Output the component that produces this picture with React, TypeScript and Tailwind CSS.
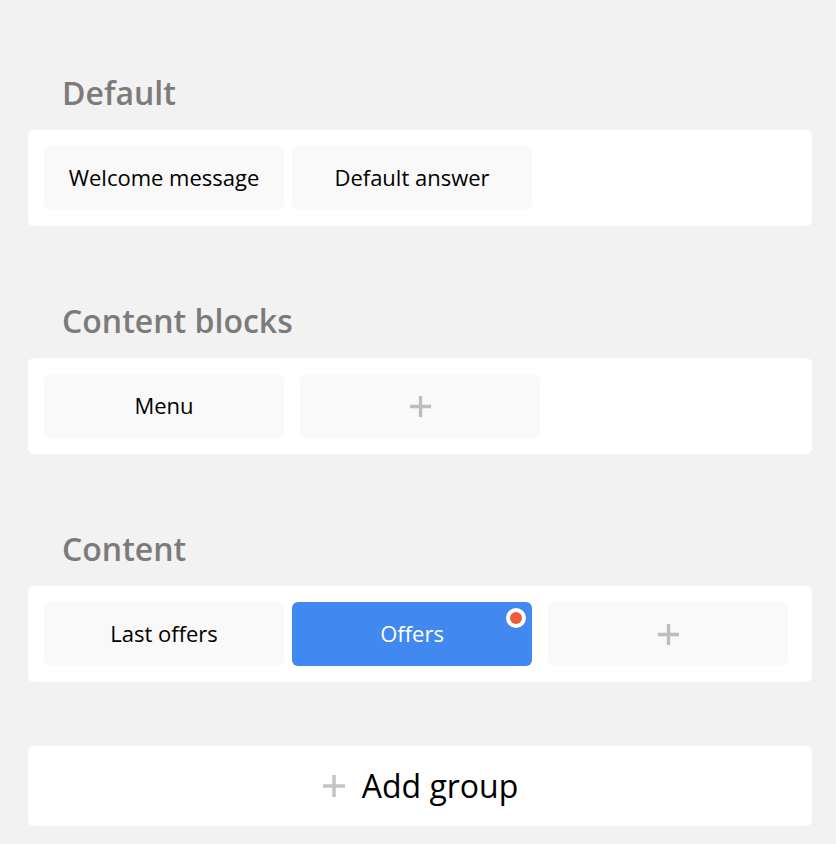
import React from "react";

type Item = { label?: string; active?: boolean; badge?: boolean; add?: boolean };

const sections: { title: string; items: Item[] }[] = [
  { title: "Default", items: [{ label: "Welcome message" }, { label: "Default answer" }] },
  { title: "Content blocks", items: [{ label: "Menu" }, { add: true }] },
  {
    title: "Content",
    items: [{ label: "Last offers" }, { label: "Offers", active: true, badge: true }, { add: true }],
  },
];

function Plus({ size = 24, color = "#bdbdbd" }: { size?: number; color?: string }) {
  return (
    <svg width={size} height={size} viewBox="0 0 24 24">
      <path d="M12 1v22M1 12h22" stroke={color} strokeWidth="3.5" fill="none" />
    </svg>
  );
}

function Tile({ item }: { item: Item }) {
  if (item.add) {
    return (
      <div className="ml-2 flex h-16 w-[240px] items-center justify-center rounded-md bg-[#f9f9f9]">
        <Plus size={23} />
      </div>
    );
  }
  return (
    <div
      className={
        item.active
          ? "relative flex h-16 w-[240px] items-center justify-center rounded-md bg-[#4189f0] pb-0.5 text-[22px] text-white"
          : "relative flex h-16 w-[240px] items-center justify-center rounded-md bg-[#f9f9f9] pb-0.5 text-[22px] text-black"
      }
    >
      {item.label}
      {item.badge && (
        <span className="absolute right-[6px] top-[6px] flex h-5 w-5 items-center justify-center rounded-full bg-white">
          <span className="h-3 w-3 rounded-full bg-[#ef5b3b]" />
        </span>
      )}
    </div>
  );
}

export default function App() {
  return (
    <div
      className="min-h-[844px] bg-[#f2f2f2] pl-7 pr-6 pt-[74px] pb-[18px]"
      style={{ fontFamily: '"Open Sans", sans-serif' }}
    >
      {sections.map((s) => (
        <section key={s.title} className="mb-[76px] last-of-type:mb-16">
          <h2 className="mb-[18px] h-[38px] pl-[34px] text-[32px] font-semibold leading-[38px] text-[#7b7b7b]">
            {s.title}
          </h2>
          <div className="flex h-24 items-center gap-2 rounded-md bg-white px-4">
            {s.items.map((it, i) => (
              <Tile key={i} item={it} />
            ))}
          </div>
        </section>
      ))}
      <div className="flex h-20 items-center justify-center gap-4 rounded-md bg-white text-[32px] text-black">
        <Plus size={24} color="#c4c4c4" />
        <span>Add group</span>
      </div>
    </div>
  );
}
